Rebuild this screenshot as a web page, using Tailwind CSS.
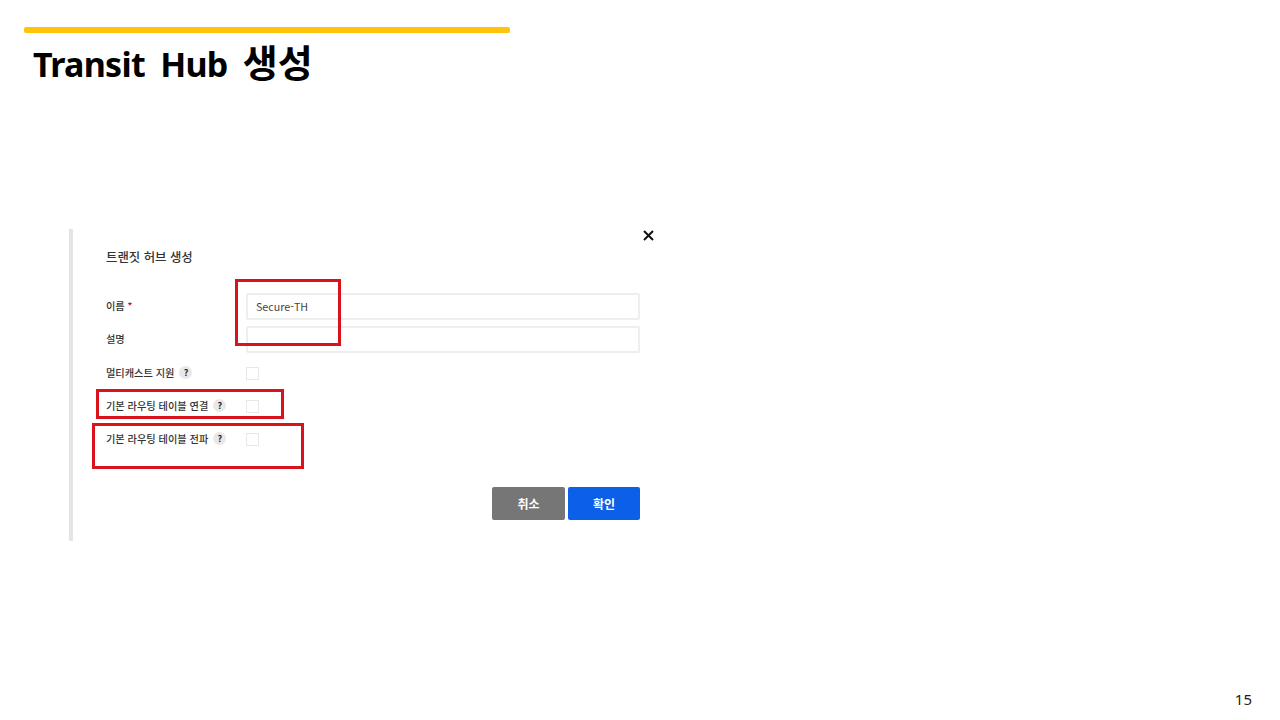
<!DOCTYPE html>
<html lang="ko">
<head>
    <meta charset="UTF-8">
    <title>Transit Hub 생성</title>
    <script src="https://cdn.jsdelivr.net/npm/@tailwindcss/browser@4"></script>
</head>
<body class="bg-white font-['Noto_Sans','Noto_Sans_CJK_KR',sans-serif] text-black">
    <div class="relative w-[1280px] h-[720px] overflow-hidden pt-[27px] pl-6">
        <!-- slide header -->
        <div class="w-[486px] h-[6px] rounded-[2px] bg-[#fdc40b]"></div>
        <h1 class="mt-[4px] ml-[9px] h-[50px] text-[34px] leading-[50px] font-bold tracking-[-0.7px] [word-spacing:7px]">Transit Hub <span class="text-[38px] tracking-[0px]">생성</span></h1>

        <!-- dialog -->
        <div class="relative mt-[142px] ml-[45px] w-[590px] h-[312px] border-l-4 border-[#e4e4e4] pl-[33px] pt-[20px] font-['Noto_Sans_CJK_KR',sans-serif] text-[#333]">
            <svg class="absolute left-[570px] top-[1px] w-[11px] h-[11px]" viewBox="0 0 11 11" fill="none" stroke="#111" stroke-width="2"><path d="M1 1l9 9M10 1l-9 9"/></svg>
            <h2 class="text-[12.4px] leading-4 font-medium">트랜짓 허브 생성</h2>

            <div class="mt-[28px] flex items-center h-[27px]">
                <label class="w-[140px] -mt-[2px] text-[10.2px] font-medium">이름 <span class="text-[#d0021b]">*</span></label>
                <div class="w-[394px] h-[27px] border-2 border-[#eeeeee] rounded-[2px] pl-2 text-[10.7px] leading-[23px] text-[#444]">Secure-TH</div>
            </div>
            <div class="mt-[6px] flex items-center h-[27px]">
                <label class="w-[140px] -mt-[2px] text-[10.2px] font-medium">설명</label>
                <div class="w-[394px] h-[27px] border-2 border-[#eeeeee] rounded-[2px]"></div>
            </div>
            <div class="mt-[7px] flex items-center h-[26px]">
                <label class="w-[140px] flex items-center gap-[5px] text-[10.2px] font-medium">멀티캐스트 지원 <span class="w-[13px] h-[13px] rounded-full bg-[#e8e8e8] text-[9px] leading-[13px] text-center font-bold text-[#222]">?</span></label>
                <div class="w-[13px] h-[13px] border border-[#e8e8e8]"></div>
            </div>
            <div class="mt-[7px] flex items-center h-[26px]">
                <label class="w-[140px] flex items-center gap-[5px] text-[10.2px] font-medium">기본 라우팅 테이블 연결 <span class="w-[13px] h-[13px] rounded-full bg-[#e8e8e8] text-[9px] leading-[13px] text-center font-bold text-[#222]">?</span></label>
                <div class="w-[13px] h-[13px] border border-[#e8e8e8]"></div>
            </div>
            <div class="mt-[7px] flex items-center h-[26px]">
                <label class="w-[140px] flex items-center gap-[5px] text-[10.2px] font-medium">기본 라우팅 테이블 전파 <span class="w-[13px] h-[13px] rounded-full bg-[#e8e8e8] text-[9px] leading-[13px] text-center font-bold text-[#222]">?</span></label>
                <div class="w-[13px] h-[13px] border border-[#e8e8e8]"></div>
            </div>

            <div class="mt-[35px] w-[534px] flex justify-end gap-[3px]">
                <button class="w-[73px] h-[33px] rounded-[2px] bg-[#767676] text-white text-[12px] font-bold">취소</button>
                <button class="w-[72px] h-[33px] rounded-[2px] bg-[#0b5fe8] text-white text-[12px] font-bold">확인</button>
            </div>
        </div>

        <!-- red highlight boxes -->
        <div class="absolute left-[235px] top-[279px] w-[106px] h-[67px] border-[3px] border-[#d8131b]"></div>
        <div class="absolute left-[96px] top-[389px] w-[188px] h-[30px] border-[3px] border-[#d8131b]"></div>
        <div class="absolute left-[92px] top-[423px] w-[212px] h-[46px] border-[3px] border-[#d8131b]"></div>

        <div class="absolute right-[28px] top-[689px] text-[15px] leading-5 text-[#222]">15</div>
    </div>
</body>
</html>
